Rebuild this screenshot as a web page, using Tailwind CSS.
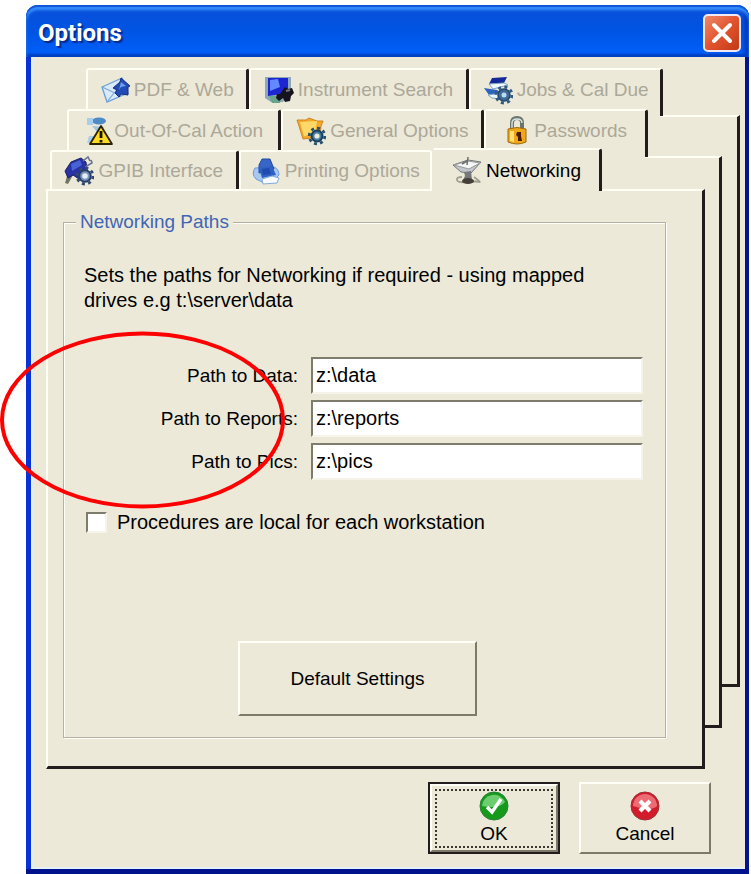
<!DOCTYPE html>
<html lang="en">
<head>
<meta charset="utf-8">
<meta name="viewport" content="width=device-width, initial-scale=1">
<title>Options</title>
<script src="https://cdn.jsdelivr.net/npm/@tailwindcss/browser@4"></script>
</head>
<body class="relative bg-white font-['Liberation_Sans',Arial,sans-serif] text-[19px] leading-[25px] text-black">
<main class="pt-[5px] pl-[26px] pr-[2px]">
<section aria-label="Options" class="rounded-t-xl border-b-[5px] border-b-[#00138c] bg-linear-to-r from-[#0831d9] via-[#1660e8] to-[#00138c]">
  <header class="flex h-[52px] items-center justify-between rounded-t-xl bg-linear-to-b from-[#0a4fd8] via-[#0054e3] to-[#0061fc] pl-3 pr-2 shadow-[inset_0_2px_1px_#0f55d8,inset_0_5px_3px_#3a93ff,inset_0_-3px_2px_#0040c0,inset_-4px_0_4px_#0030b0]">
    <h1 class="pt-1 font-['Roboto','Open_Sans',sans-serif] text-[24px] font-bold text-white [text-shadow:2px_2px_1px_#0a2a8c]">Options</h1>
    <button type="button" aria-label="Close" class="mt-1 flex size-[38px] items-center justify-center rounded-[5px] border-2 border-[#f0e8f4] bg-linear-to-br from-[#ee8866] via-[#e2532f] to-[#c23a14]">
      <svg class="size-6" viewBox="0 0 24 24" fill="none" stroke="#fff" stroke-width="4" stroke-linecap="round"><path d="M4 4 20 20M20 4 4 20"/></svg>
    </button>
  </header>

  <div class="ml-[5px] mr-[4px] border-l-2 border-b-2 border-[#e4f0fa] bg-[#ece9d8] pb-[13px]">
    <div class="grid pt-[11px] pl-[13px] pr-[5px]">
      <div class="mt-[47px] mb-[82px] w-[80px] justify-self-end border-t-2 border-r-3 border-b-3 border-t-[#fffff4] border-r-[#221c1c] border-b-[#221c1c] bg-[#ece9d8] [grid-area:1/1]"></div>
      <div class="mt-[88px] mr-[18px] mb-[41px] w-[77px] justify-self-end border-t-2 border-r-3 border-b-3 border-t-[#fffff4] border-r-[#221c1c] border-b-[#221c1c] bg-[#ece9d8] [grid-area:1/1]"></div>

      <div class="mr-[35px] flex flex-col [grid-area:1/1]">
        <div role="tablist" aria-label="Option pages" class="-mr-[35px] flex flex-col text-[#aca899]">
          <div class="flex h-[41px] pl-10 pr-[77px]">
            <button type="button" role="tab" class="flex min-w-0 flex-162 items-center justify-center gap-1 rounded-t-[3px] border-t-2 border-l-2 border-r-3 border-t-[#fffff4] border-l-[#fffff4] border-r-[#221c1c] bg-[#ece9d8] whitespace-nowrap">
              <svg class="size-[30px] shrink-0" viewBox="0 0 30 30"><path d="M2 12 22 3 28 18 7 27Z" fill="#d9eafa" stroke="#6c9fd8" stroke-width="1.3"/><path d="m2 12 13 6 7-15M7 27l7-9 14 0" fill="none" stroke="#7da9dc" stroke-width="1.2"/><path d="m21 3 9 8-2 1v8l-7-1-2 3-4-4 2-3-4-2 7-6Z" fill="#234bb5" stroke="#122d80"/><path d="m21 7 5 4-5 1-2 3Z" fill="#6aa0ee"/></svg>
              PDF &amp; Web
            </button>
            <button type="button" role="tab" class="flex min-w-0 flex-222 items-center justify-center gap-1 rounded-t-[3px] border-t-2 border-l-2 border-r-3 border-t-[#fffff4] border-l-[#fffff4] border-r-[#221c1c] bg-[#ece9d8] whitespace-nowrap">
              <svg class="size-[30px] shrink-0" viewBox="0 0 30 30"><path d="M1 2h26v16l-8 9H7l-6-4Z" fill="#8da9b8"/><path d="M4 3h20v15l-20 3Z" fill="#1c25cf"/><path d="m6 5 8-1 2 8-10 4Z" fill="#6489ff"/><path d="M5 21h13l-2 7H8Z" fill="#66a48c"/><path d="m16 19 5-7 3 2 4-1 2 5-3 3-1 5-5 1-2-4-4 3-3-3 1-4Z" fill="#15131d"/><path d="m22 16 4-1" stroke="#777" stroke-width="2"/></svg>
              Instrument Search
            </button>
            <button type="button" role="tab" class="-mb-[7px] flex min-w-0 flex-194 items-center justify-center gap-1 rounded-t-[3px] border-t-2 border-l-2 border-r-3 border-t-[#fffff4] border-l-[#fffff4] border-r-[#221c1c] bg-[#ece9d8] pb-[7px] whitespace-nowrap">
              <svg class="size-[30px] shrink-0" viewBox="0 0 30 30"><path d="m9 3 15-1-3 6-15 1Z" fill="#14289a"/><path d="m6 9 15-1 4 2-15 4Z" fill="#f4fbff" stroke="#7ca2ca"/><path d="m1 13 13 2 5 3-13 2Z" fill="#2c63bd"/><path d="m5 20 13-2v6l-9-1Z" fill="#eaf5fc" stroke="#80a3c4"/><circle cx="21" cy="20" r="6" fill="#416b94" stroke="#234668" stroke-width="1.5"/><circle cx="21" cy="20" r="8" fill="none" stroke="#315a83" stroke-width="3" stroke-dasharray="3 3.3"/><circle cx="21" cy="20" r="2.5" fill="#b9dcf4"/></svg>
              Jobs &amp; Cal Due
            </button>
          </div>
          <div class="relative flex h-[41px] pl-[21px] pr-[92px]">
            <button type="button" role="tab" class="flex min-w-0 flex-215 items-center justify-center rounded-t-[3px] border-t-2 border-l-2 border-r-3 border-t-[#fffff4] border-l-[#fffff4] border-r-[#221c1c] bg-[#ece9d8] whitespace-nowrap">
              <svg class="size-[30px] shrink-0" viewBox="0 0 30 30"><ellipse cx="15" cy="5" rx="7" ry="3.5" fill="#4c8bc4"/><path d="M3 2h6v7H3Zm2 18h5v7H3Z" fill="#a9cdec"/><path d="m8 10 12 1-5 7Z" fill="#9cc5e5"/><path d="M17 10 28 28H6Z" fill="#ffdb21" stroke="#2b2100" stroke-width="1.8" stroke-linejoin="round"/><path d="M17 15v7m0 2v2.5" stroke="#1c1300" stroke-width="2.8"/></svg>
              Out-Of-Cal Action
            </button>
            <button type="button" role="tab" class="flex min-w-0 flex-203 items-center justify-center gap-1 rounded-t-[3px] border-t-2 border-l-2 border-r-3 border-t-[#fffff4] border-l-[#fffff4] border-r-[#221c1c] bg-[#ece9d8] whitespace-nowrap">
              <svg class="size-[30px] shrink-0" viewBox="0 0 30 30"><path d="m1 4 9 0 3-2 8 3 6 0-2 5-1 11-17 2L3 10Z" fill="#f2a92c" stroke="#cf8420"/><path d="m4 6 17-1-2 13-11 2Z" fill="#ffd968"/><circle cx="21" cy="20" r="5.5" fill="#477a9f" stroke="#173f63" stroke-width="2"/><circle cx="21" cy="20" r="7.8" fill="none" stroke="#25516f" stroke-width="2.8" stroke-dasharray="3 3.1"/><circle cx="21" cy="20" r="2.6" fill="#e6edd8"/></svg>
              General Options
            </button>
            <button type="button" role="tab" class="-mb-[7px] flex min-w-0 flex-163 items-center justify-center gap-1 rounded-t-[3px] border-t-2 border-l-2 border-r-3 border-t-[#fffff4] border-l-[#fffff4] border-r-[#221c1c] bg-[#ece9d8] pb-[7px] whitespace-nowrap">
              <svg class="h-[30px] w-[26px] shrink-0" viewBox="2 0 26 30"><path d="M10 14V7q0-5 5-5t5 5v7" fill="none" stroke="#68766f" stroke-width="4"/><path d="M10 13V7q0-4 5-4t5 4" fill="none" stroke="#dce4e2" stroke-width="1.4"/><path d="M6 13q9-3 18 0v13q-9 4-18 0Z" fill="#f0a81b" stroke="#9d6810"/><path d="M8 15h4v11l-4-1Z" fill="#ffe06c"/><path d="M15 16h4v4l1 5h-4v-4l-2-2Z" fill="#4c1c05"/></svg>
              Passwords
            </button>
          </div>
          <div class="relative flex h-[39px] pl-1 pr-[138px]">
            <button type="button" role="tab" class="flex min-w-0 flex-189 items-center justify-center gap-1 rounded-t-[3px] border-t-2 border-l-2 border-r-3 border-t-[#fffff4] border-l-[#fffff4] border-r-[#221c1c] bg-[#ece9d8] whitespace-nowrap">
              <svg class="size-[30px] shrink-0" viewBox="0 0 30 30"><path d="m1 27 3-10 5 2-5 9Z" fill="#707565"/><path d="m1 15 6-9 10-4 5 4 1 9-8 8-6-4-5 3Z" fill="#2931a5" stroke="#17215f"/><path d="m7 8 9-4 2 5-10 6Z" fill="#4863d3"/><path d="m19 5 5-4 2 4m-5 6 7-4-1-3" stroke="#687391" stroke-width="1.6" fill="none"/><circle cx="21" cy="20" r="5.8" fill="#7694ba" stroke="#283e64" stroke-width="2"/><circle cx="21" cy="20" r="8" fill="none" stroke="#334970" stroke-width="2.8" stroke-dasharray="3 3.3"/><circle cx="21" cy="20" r="2.8" fill="#e4ecf4"/></svg>
              GPIB Interface
            </button>
            <button type="button" role="tab" class="flex min-w-0 flex-195 items-center justify-center gap-1 rounded-t-[3px] border-t-2 border-l-2 border-r-2 border-[#fffff4] bg-[#ece9d8] whitespace-nowrap">
              <svg class="size-[30px] shrink-0" viewBox="0 0 30 30"><path d="M4 12q-4 6 1 11l6 3 12-2 5-5q0-6-5-8Z" fill="#a9c8f0" stroke="#6d9ade"/><path d="m8 9 3-6 8 0 4 10-15 4Z" fill="#3866c6" stroke="#204ba5"/><path d="m8 12 13-2 4 9-14 3Z" fill="#2f60c4"/><path d="m11 13 7-1 2 6-8 1Z" fill="#1d4cae"/><path d="m11 23 10-3 7 2-2 5-14 1Z" fill="#f7fbff" stroke="#7eabd9"/></svg>
              Printing Options
            </button>
            <button type="button" role="tab" aria-selected="true" class="-mt-[2px] -mb-[2px] flex min-w-0 flex-170 items-center justify-center gap-1 rounded-t-[3px] border-t-2 border-l-2 border-r-3 border-t-[#fffff4] border-l-[#ece9d8] border-r-[#221c1c] bg-[#ece9d8] whitespace-nowrap text-black">
              <svg class="size-[30px] shrink-0" viewBox="0 0 30 30"><path d="m1 9 15-5 13 2-10 11-10-1Z" fill="#c3c6ca" stroke="#74777a"/><path d="m2 9 14-4 12 2-11 6Z" fill="#f4f5f5" stroke="#999"/><path d="m15 9 1-8m-6 7 5-3" stroke="#6d6d6d" stroke-width="1.5"/><path d="m12 16 7-1 1 9h-9l2-4Z" fill="#77787a"/><path d="M10 21q-6 0-5 3t10 2 12 0-5-5" fill="none" stroke="#a19e92" stroke-width="1.8"/><ellipse cx="16" cy="25" rx="6" ry="3" fill="#444039"/></svg>
              Networking
            </button>
          </div>
        </div>

        <div role="tabpanel" aria-label="Networking" class="border-t-2 border-l-2 border-r-3 border-b-3 border-t-[#fffff4] border-l-[#fffff4] border-r-[#221c1c] border-b-[#221c1c] bg-[#ece9d8] pt-[19px] pr-9 pb-7 pl-[15px]">
          <fieldset class="border border-[#b4b1a4] px-5 pb-[21px] shadow-[1px_1px_0_#fffff8,inset_1px_1px_0_#fffff8]">
            <legend class="-ml-2 bg-[#ece9d8] px-1 leading-6 text-[#3f66b5]">Networking Paths</legend>
            <p class="max-w-[520px] pt-[29px] text-[20px]">Sets the paths for Networking if required - using mapped drives e.g t:\server\data</p>
            <div class="mt-[44px] grid grid-cols-[214px_1fr] items-center gap-x-[13px] gap-y-[6px] pr-[2px]">
              <label for="data" class="text-right">Path to Data:</label>
              <input id="data" type="text" value="z:\data" class="h-[37px] w-full min-w-0 border-2 border-t-[#7e7c6c] border-r-[#f6f4e9] border-b-[#f6f4e9] border-l-[#7e7c6c] bg-white px-[3px] text-[20px]">
              <label for="reports" class="text-right">Path to Reports:</label>
              <input id="reports" type="text" value="z:\reports" class="h-[37px] w-full min-w-0 border-2 border-t-[#7e7c6c] border-r-[#f6f4e9] border-b-[#f6f4e9] border-l-[#7e7c6c] bg-white px-[3px] text-[20px]">
              <label for="pics" class="text-right">Path to Pics:</label>
              <input id="pics" type="text" value="z:\pics" class="h-[37px] w-full min-w-0 border-2 border-t-[#7e7c6c] border-r-[#f6f4e9] border-b-[#f6f4e9] border-l-[#7e7c6c] bg-white px-[3px] text-[20px]">
            </div>
            <label class="mt-[30px] flex items-center gap-[10px] pl-[2px] text-[20px]">
              <input type="checkbox" class="size-[21px] appearance-none border-2 border-t-[#7e7c6c] border-r-[#f6f4e9] border-b-[#f6f4e9] border-l-[#7e7c6c] bg-white">
              Procedures are local for each workstation
            </label>
            <div class="mt-[106px] flex justify-center pr-[14px]">
              <button type="button" class="h-[75px] w-[239px] border-2 border-t-[#fffff8] border-r-[#7e7a6a] border-b-[#7e7a6a] border-l-[#fffff8] bg-[#ece9d8]">Default Settings</button>
            </div>
          </fieldset>
        </div>
      </div>
    </div>

    <div class="mt-[13px] flex justify-end gap-[19px] pr-[34px]">
      <button type="button" class="h-[72px] w-[132px] border-2 border-[#221c1c] bg-[#ece9d8]">
        <span class="flex h-full flex-col border-2 border-t-[#fffff8] border-r-[#7e7a6a] border-b-[#7e7a6a] border-l-[#fffff8] p-[3px]">
          <span class="flex flex-1 flex-col items-center justify-center border-2 border-dotted border-[#3c3830]">
            <svg class="size-[30px] shrink-0" viewBox="0 0 30 30"><circle cx="15" cy="15" r="14" fill="#159a1c" stroke="#2f7d37"/><path d="M3 15a12 12 0 0 1 23-4q-5 7-23 4Z" fill="#6ccc70"/><path d="m8 16 5 5 9-13" fill="none" stroke="#fff" stroke-width="3.4"/></svg>
            <span>OK</span>
          </span>
        </span>
      </button>
      <button type="button" class="flex h-[72px] w-[132px] flex-col items-center justify-center border-2 border-t-[#fffff8] border-r-[#7e7a6a] border-b-[#7e7a6a] border-l-[#fffff8] bg-[#ece9d8]">
        <svg class="size-[30px] shrink-0" viewBox="0 0 30 30"><circle cx="15" cy="15" r="14" fill="#d21c2c" stroke="#9c3038"/><path d="M3 15a12 12 0 0 1 24 0q-6 6-24 0Z" fill="#ec6c74"/><path d="m10 10 10 10M20 10 10 20" stroke="#fff" stroke-width="4.2"/></svg>
        <span>Cancel</span>
      </button>
    </div>
  </div>
</section>
</main>
<svg class="pointer-events-none absolute top-[331px] left-0 h-[178px] w-[286px]" viewBox="0 0 286 178" fill="none" aria-hidden="true"><ellipse cx="142.500" cy="89" rx="140.500" ry="86.500" stroke="#f00" stroke-width="4"/></svg>
</body>
</html>
